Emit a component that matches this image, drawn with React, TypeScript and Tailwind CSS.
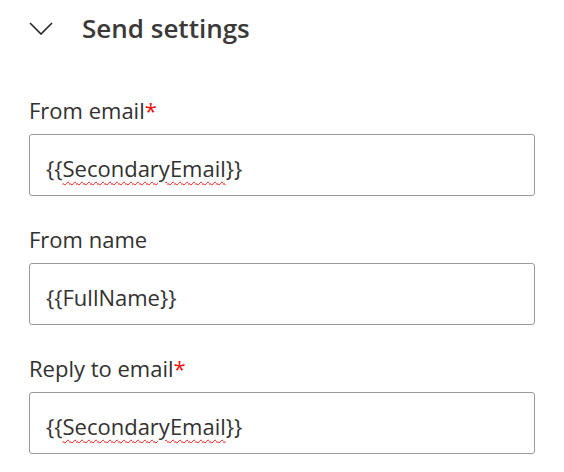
import React from "react";

function Field({ label, required, children }: { label: string; required?: boolean; children: React.ReactNode }) {
  return (
    <div className="flex flex-col">
      <div className="h-[45px] flex items-end pb-[9px] text-[22px] leading-[30px] font-normal text-[#323130]">
        <span>{label}</span>
        {required && <span className="text-[#f01010]">*</span>}
      </div>
      <div className="h-[62px] w-[506px] rounded-[3px] border-[1.5px] border-[#9a9a9a] bg-white flex items-center pl-[16px] pt-[6px] text-[22px] text-[#323130]">
        {children}
      </div>
    </div>
  );
}

const squiggle = "underline decoration-wavy decoration-[#ff1010] decoration-[1px] underline-offset-[4px]";

export default function App() {
  return (
    <div className="w-[564px] h-[472px] bg-white pl-[29px] pt-[10px]" style={{ fontFamily: '"Open Sans", "Noto Sans", sans-serif' }}>
      <div className="flex items-center h-[36px]">
        <svg width="24" height="13" viewBox="0 0 24 13">
          <path d="M1 1 L12 12 L23 1" fill="none" stroke="#242424" strokeWidth="1.6" />
        </svg>
        <span className="ml-[29px] text-[26px] font-semibold text-[#3a3938] leading-[36px]">Send settings</span>
      </div>
      <div className="flex flex-col gap-[22px] mt-[43px]">
        <Field label="From email" required>
          <span>{"{{"}<span className={squiggle}>SecondaryEmail</span>{"}}"}</span>
        </Field>
        <Field label="From name">
          <span>{"{{FullName}}"}</span>
        </Field>
        <Field label="Reply to email" required>
          <span>{"{{"}<span className={squiggle}>SecondaryEmail</span>{"}}"}</span>
        </Field>
      </div>
    </div>
  );
}
